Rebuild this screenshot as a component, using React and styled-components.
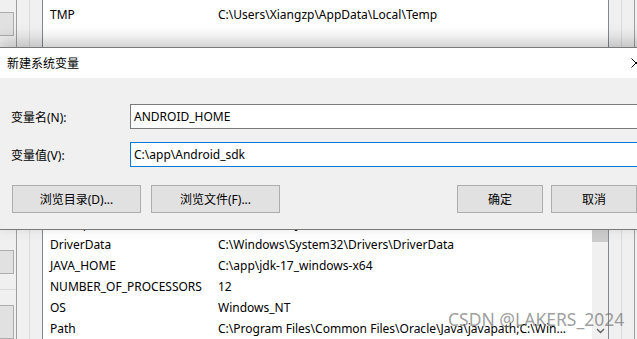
import styled, { createGlobalStyle } from "styled-components";

const GlobalStyle = createGlobalStyle`
  html, body {
    margin: 0;
    padding: 0;
    overflow: hidden;
    background: #f0f0f0;
  }
  body {
    font-family: "Noto Sans", "Noto Sans CJK SC", sans-serif;
    font-size: 12px;
    color: #000;
  }
`;

const userVars = [["TMP", "C:\\Users\\Xiangzp\\AppData\\Local\\Temp"]];

// rows above ComSpec sit behind the dialog, so the list is padded instead
const systemVars = [
  ["ComSpec", "C:\\Windows\\system32\\cmd.exe"],
  ["DriverData", "C:\\Windows\\System32\\Drivers\\DriverData"],
  ["JAVA_HOME", "C:\\app\\jdk-17_windows-x64"],
  ["NUMBER_OF_PROCESSORS", "12"],
  ["OS", "Windows_NT"],
  ["Path", "C:\\Program Files\\Common Files\\Oracle\\Java\\javapath;C:\\Win..."],
];

const Desktop = styled.div`
  position: relative;
  display: flex;
  width: 637px;
  height: 339px;
  overflow: hidden;
  background: #f0f0f0;
`;

const LeftStrip = styled.div`
  width: 16px;
  flex: none;
  border-right: 1px solid #a0a0a0;
  display: flex;
  flex-direction: column;
`;

const StubButton = styled.div`
  margin-top: ${(p) => p.$top}px;
  margin-left: -6px;
  width: 20px;
  height: ${(p) => p.$h}px;
  box-sizing: border-box;
  background: #e1e1e1;
  border: 1px solid #adadad;
`;

const StubLine = styled.div`
  margin-top: ${(p) => p.$top}px;
  height: 1px;
  background: #dcdcdc;
`;

const Gutter = styled.div`
  width: 12px;
  flex: none;
  background: #f0f0f0;
  border-right: ${(p) => (p.$line ? `1px solid ${p.$line}` : "none")};
`;

const MainColumn = styled.div`
  width: 567px;
  flex: none;
  display: flex;
  flex-direction: column;
`;

const ListBox = styled.div`
  box-sizing: border-box;
  height: ${(p) => p.$h}px;
  margin-top: ${(p) => p.$top || 0}px;
  background: #fff;
  border-left: 1px solid #828790;
  border-right: 1px solid #828790;
  display: flex;
`;

const Rows = styled.div`
  flex: 1;
  padding-top: ${(p) => p.$pad || 0}px;
`;

const Row = styled.div`
  display: flex;
  height: 21px;
  align-items: center;
  padding-left: 7px;
  white-space: nowrap;
`;

const NameCell = styled.div`
  width: 168px;
  flex: none;
`;

const ValueCell = styled.div`
  flex: 1;
  overflow: hidden;
`;

const ScrollBar = styled.div`
  width: 16px;
  flex: none;
  background: #f0f0f0;
  display: flex;
  flex-direction: column;
`;

const Thumb = styled.div`
  margin-top: ${(p) => p.$top}px;
  height: ${(p) => p.$h}px;
  background: #cdcdcd;
`;

const ArrowButton = styled.div`
  margin-top: auto;
  height: 17px;
  display: flex;
  align-items: center;
  justify-content: center;
  color: #606060;
`;

const RightStrip = styled.div`
  flex: 1;
  background: #f0f0f0;
`;

const Dialog = styled.div`
  position: absolute;
  top: 47px;
  left: -1px;
  width: 660px;
  border: 1px solid #7a7a7a;
  background: #f0f0f0;
  box-shadow: 0 -6px 16px rgba(0, 0, 0, 0.22);
`;

const TitleBar = styled.div`
  height: 30px;
  background: #fff;
  display: flex;
  align-items: center;
  padding-left: 7px;
`;

const Title = styled.div`
  flex: 1;
`;

const CloseButton = styled.div`
  width: 46px;
  height: 30px;
  display: flex;
  align-items: center;
  justify-content: center;
  margin-right: 1px;
`;

const Client = styled.div`
  padding: 26px 23px 16px 0;
`;

const Form = styled.div`
  display: grid;
  grid-template-columns: 130px 1fr;
  row-gap: 13px;
  align-items: center;
`;

const Label = styled.div`
  padding-left: 11px;
`;

const Field = styled.div`
  box-sizing: border-box;
  height: 25px;
  margin-right: -23px;
  background: #fff;
  border: 1px solid ${(p) => (p.$focused ? "#0078d7" : "#7a7a7a")};
  display: flex;
  align-items: center;
  padding-left: 3px;
`;

const ButtonRow = styled.div`
  display: flex;
  margin-top: 18px;
  padding-left: 12px;
`;

const ButtonGroup = styled.div`
  display: flex;
  gap: ${(p) => p.$gap}px;
  margin-left: ${(p) => (p.$right ? "auto" : "0")};
`;

const Button = styled.div`
  box-sizing: border-box;
  width: ${(p) => p.$w}px;
  height: 28px;
  background: #e1e1e1;
  border: 1px solid #adadad;
  display: flex;
  align-items: center;
  justify-content: center;
`;

const Watermark = styled.div`
  position: absolute;
  left: 448px;
  top: 311px;
  font-size: 17.5px;
  line-height: 1;
  color: rgba(110, 110, 110, 0.68);
  white-space: nowrap;
  pointer-events: none;
`;

const VarList = ({ vars, pad }) => (
  <Rows $pad={pad}>
    {vars.map(([name, value]) => (
      <Row key={name}>
        <NameCell>{name}</NameCell>
        <ValueCell>{value}</ValueCell>
      </Row>
    ))}
  </Rows>
);

export default function App() {
  return (
    <>
      <GlobalStyle />
      <Desktop>
        <LeftStrip>
          <StubButton $top={12} $h={28} />
          <StubButton $top={214} $h={28} />
          <StubLine $top={15} />
          <StubButton $top={15} $h={40} />
        </LeftStrip>
        <Gutter $line="#dadada" />
        <Gutter />
        <MainColumn>
          <ListBox $h={110}>
            <VarList vars={userVars} pad={4} />
          </ListBox>
          <ListBox $h={212} $top={20}>
            <VarList vars={systemVars} pad={84} />
            <ScrollBar>
              <Thumb $top={40} $h={73} />
              <ArrowButton>
                <svg width="9" height="6" viewBox="0 0 9 6">
                  <path d="M1 1l3.5 3.5L8 1" fill="none" stroke="currentColor" strokeWidth="1.4" />
                </svg>
              </ArrowButton>
            </ScrollBar>
          </ListBox>
        </MainColumn>
        <Gutter $line="#dadada" />
        <Gutter $line="#a0a0a0" />
        <RightStrip />

        <Dialog>
          <TitleBar>
            <Title>新建系统变量</Title>
            <CloseButton>
              <svg width="10" height="10" viewBox="0 0 10 10">
                <path d="M0.5 0.5l9 9M9.5 0.5l-9 9" stroke="#000" strokeWidth="1" />
              </svg>
            </CloseButton>
          </TitleBar>
          <Client>
            <Form>
              <Label>变量名(N):</Label>
              <Field>ANDROID_HOME</Field>
              <Label>变量值(V):</Label>
              <Field $focused>C:\app\Android_sdk</Field>
            </Form>
            <ButtonRow>
              <ButtonGroup $gap={10}>
                <Button $w={129}>浏览目录(D)...</Button>
                <Button $w={129}>浏览文件(F)...</Button>
              </ButtonGroup>
              <ButtonGroup $gap={8} $right>
                <Button $w={86}>确定</Button>
                <Button $w={86}>取消</Button>
              </ButtonGroup>
            </ButtonRow>
          </Client>
        </Dialog>
        <Watermark>CSDN @LAKERS_2024</Watermark>
      </Desktop>
    </>
  );
}
